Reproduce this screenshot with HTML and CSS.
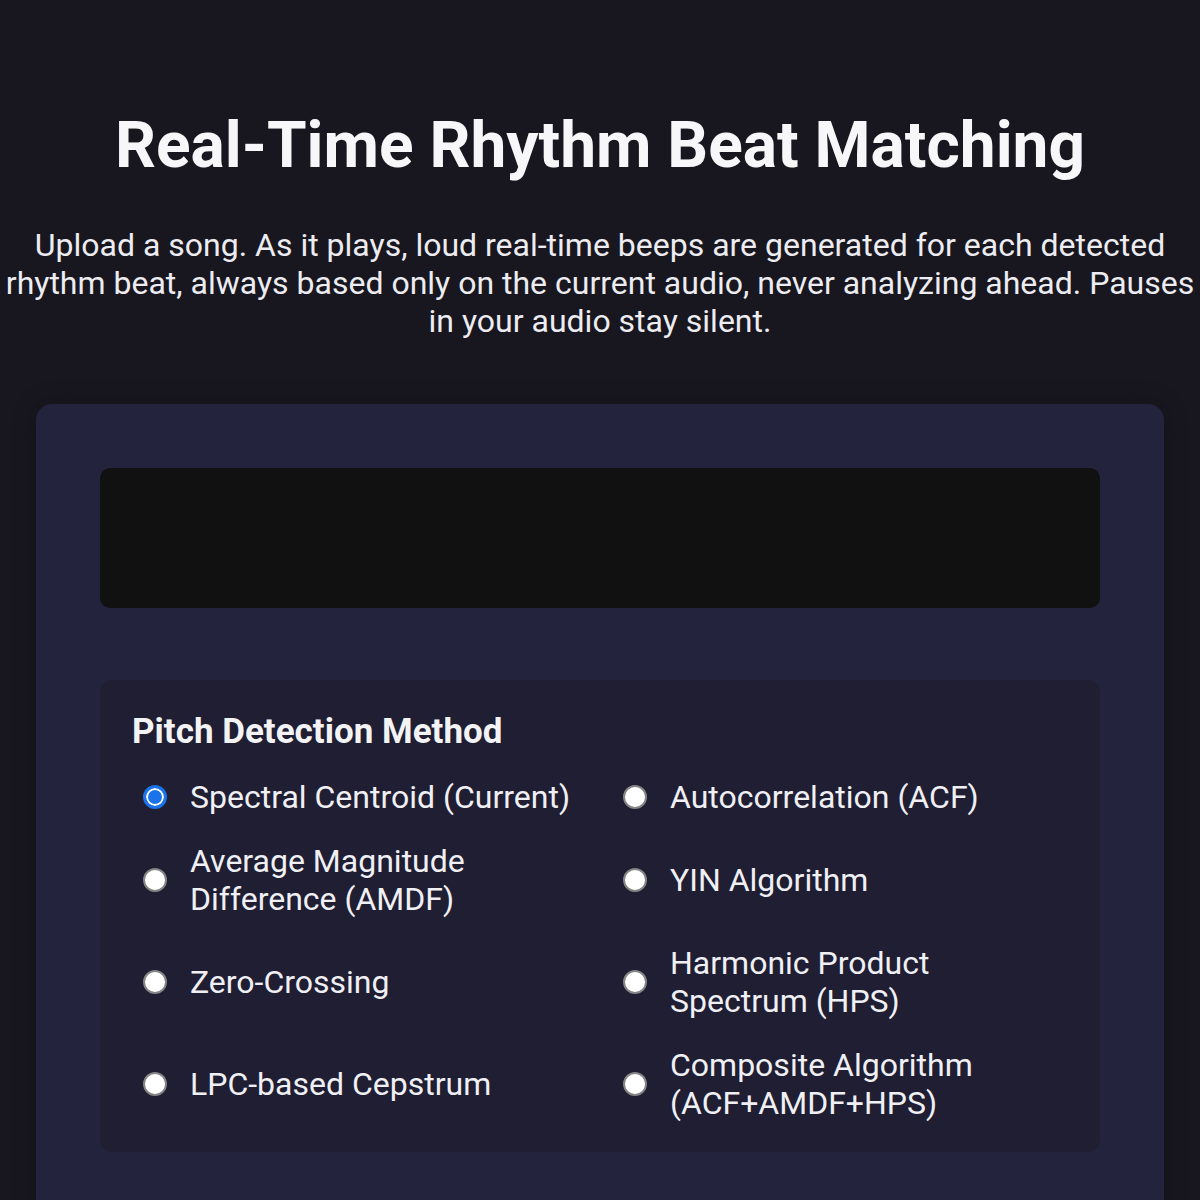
FILE: index.html
```html
<!DOCTYPE html>
<html>
<head>
<meta charset="utf-8">
<link rel="stylesheet" href="styles.css">
</head>
<body>
<header class="hero">
  <h1 class="title">Real-Time Rhythm Beat Matching</h1>
  <p class="intro">Upload a song. As it plays, loud real-time beeps are generated for each detected rhythm beat, always based only on the current audio, never analyzing ahead. Pauses in your audio stay silent.</p>
</header>
<main class="card">
  <div class="canvas"></div>
  <section class="panel">
    <h2 class="panel-title">Pitch Detection Method</h2>
    <div class="options">
      <label class="option"><input type="radio" name="m" checked><span>Spectral Centroid (Current)</span></label>
      <label class="option"><input type="radio" name="m"><span>Autocorrelation (ACF)</span></label>
      <label class="option"><input type="radio" name="m"><span>Average Magnitude Difference (AMDF)</span></label>
      <label class="option"><input type="radio" name="m"><span>YIN Algorithm</span></label>
      <label class="option"><input type="radio" name="m"><span>Zero-Crossing</span></label>
      <label class="option"><input type="radio" name="m"><span>Harmonic Product Spectrum (HPS)</span></label>
      <label class="option"><input type="radio" name="m"><span>LPC-based Cepstrum</span></label>
      <label class="option"><input type="radio" name="m"><span>Composite Algorithm (ACF+AMDF+HPS)</span></label>
    </div>
  </section>
</main>
</body>
</html>
```
FILE: styles.css
```css
html, body {
  margin: 0;
  padding: 0;
  background: #18171f;
  color: #f3f3f6;
  font-family: Roboto, "Noto Sans", sans-serif;
}
.hero {
  text-align: center;
  padding: 108px 0 0;
}
.title {
  margin: 0;
  font-size: 64px;
  font-weight: 700;
  line-height: 76px;
  color: #f7f7f9;
}
.intro {
  margin: 42px 0 0;
  font-size: 32px;
  line-height: 38px;
  color: #ececf1;
}
.card {
  margin: 64px 36px 0;
  background: #24233d;
  border-radius: 16px;
  padding: 64px;
  box-shadow: 0 0 24px rgba(0,0,0,0.25);
}
.canvas {
  height: 140px;
  background: #111111;
  border-radius: 10px;
}
.panel {
  margin-top: 72px;
  background: #1f1e33;
  border-radius: 12px;
  padding: 31px 32px 24px;
}
.panel-title {
  margin: 0 0 19px;
  font-size: 35px;
  font-weight: 700;
  line-height: 42px;
  color: #f3f3f6;
}
.options {
  display: grid;
  grid-template-columns: 1fr 1fr;
  column-gap: 24px;
  row-gap: 14px;
}
.option {
  display: flex;
  align-items: center;
  gap: 23px;
  padding: 6px 0 6px 11px;
  font-size: 32px;
  line-height: 38px;
  color: #f0f0f4;
}
.option input {
  appearance: none;
  -webkit-appearance: none;
  flex: none;
  margin: 0;
  width: 24px;
  height: 24px;
  border-radius: 50%;
  background: #ffffff;
  border: 2px solid #858585;
  box-sizing: border-box;
}
.option input:checked {
  border: 3px solid #1a73e8;
  background: #1a73e8;
  box-shadow: inset 0 0 0 2px #ffffff;
}
```
